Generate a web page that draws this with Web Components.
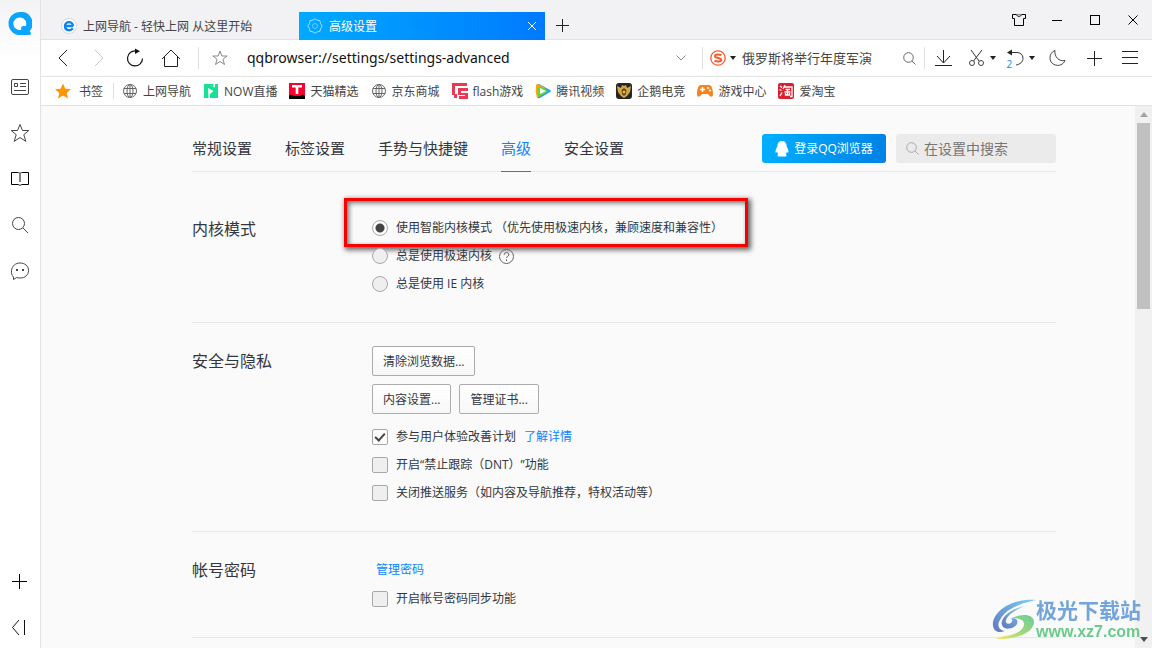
<!DOCTYPE html>
<html lang="zh-CN">
<head>
<meta charset="utf-8">
<meta name="viewport" content="width=device-width, initial-scale=1">
<title>高级设置</title>
<style>
  html, body { margin: 0; height: 100%; }
  body {
    font: 12px/20px "Open Sans", "Noto Sans CJK SC", sans-serif;
    color: #333640;
    overflow: hidden;
    text-spacing-trim: space-all;
  }
</style>
</head>
<body>
<browser-window></browser-window>

<script>
const ICONS = {
  logo: [24, 24, '<path fill="#0aa5ff" d="M12 0a11.500 11.500 0 1 0 0 23h8.500q2.500 0 2.500-1.500c0-1-1-1.500-1.200-2.500A11.500 11.500 0 0 0 12 0z"/><path fill="#fff" d="M12 5.500a6.300 6.300 0 1 0 1.500 12.300c-1.500-2.600.7-4.600 4.300-3.600A6.300 6.300 0 0 0 12 5.500z"/>'],
  news: [20, 18, '<rect x="1.500" y="1.500" width="17" height="15" rx="1.500"/><path d="M4.500 5.500h3v3h-3zM10 5.500h6M10 8.500h6M4 12.500h12"/>'],
  star: [20, 20, '<path d="M10 1.500l2.500 6h6.300l-5 4.200 2 6.600L10 14.600l-5.800 3.700 2-6.600-5-4.200h6.300z"/>'],
  book: [20, 16, '<path stroke="#000" d="M10 3v8M10 2.500C9 1.500 8 1.500 7 1.500H1.500v12H7c1.500 0 2.500.2 3 1 .5-.8 1.500-1 3-1h5.500v-12H13c-1 0-2 0-3 1z"/>'],
  search: [18, 18, '<circle cx="7.500" cy="7.500" r="6"/><path d="M12 12l5 5"/>'],
  chat: [20, 20, '<path d="M3.500 16C1.800 14.500 1.200 12 1.500 9.500 2 5 5.500 2 10 2c5 0 8.500 3 8.500 7.500S15 17 10 17c-1.300 0-2.300-.1-3.300-.5L3.500 18.500z"/><path stroke-width="2" stroke="#444" d="M6 9h2M12 9h2"/>'],
  plus: [16, 16, '<path stroke="#000" d="M7.500 1v15M0 8.500h15"/>'],
  collapse: [16, 16, '<path stroke="#111" d="M7 1L.5 8.500 7 16M12.500 1v15"/>'],
  ie: [16, 16, '<circle cx="8" cy="8" r="7.500" fill="#fff" stroke="#d3d9e2"/><path stroke="#0b84f5" stroke-width="2.400" d="M4 8h8.200M12 8c0-5.200-8-5.200-8 0s6 5 7.800 2.300"/>'],
  gear: [16, 16, '<path stroke="#9fdcff" d="M8 .8l2 1.300 2.900.5.6 2.800L15.200 8l-1.700 2.600-.6 2.800-2.900.5-2 1.300-2-1.300-2.900-.5-.6-2.800L.8 8l1.700-2.600.6-2.800L6 2.100z"/><circle cx="8" cy="8" r="2.500" stroke="#6cc7ff"/>'],
  close: [10, 10, '<path stroke="currentColor" d="M1 1l8 8M9 1L1 9"/>'],
  shirt: [14, 14, '<path stroke="#000" d="M.5 1.500h4c.5 2.500 4.500 2.500 5 0h4v4h-2v7h-9v-7h-2z"/><path stroke="#888" d="M4.500 1.500h5"/>'],
  min: [11, 11, '<path stroke="#000" d="M0 5.500h10"/>'],
  max: [11, 11, '<rect x=".5" y=".5" width="9" height="9" stroke="#000"/>'],
  winclose: [11, 11, '<path stroke="#000" d="M.5.500l9 9M9.500.500l-9 9"/>'],
  back: [10, 18, '<path stroke="#222" d="M9 1L1 9l8 8"/>'],
  forward: [10, 18, '<path stroke="#c8c8c8" d="M1 1l8 8-8 8"/>'],
  reload: [18, 20, '<path stroke="#111" stroke-width="1.200" d="M10 3a7.500 7.500 0 1 0 6.500 7.500"/><path fill="#111" d="M9 .500l5 2.800-5 2.700z"/>'],
  home: [20, 18, '<path stroke="#222" d="M1 10L10 1l9 9M3.500 8v9.500h13V8"/>'],
  down: [10, 6, '<path stroke="#888" d="M.5.500L5 5 9.500.500"/>'],
  caret: [6, 4, '<path fill="#222" d="M0 0h6L3 4z"/>'],
  sogou: [16, 16, '<circle cx="8" cy="8" r="7.200" stroke="#fb5a2b" stroke-width="1.300" fill="#fff"/><path stroke="#fb5a2b" stroke-width="2" d="M11.500 5.200C9 4 5 4 5 6.200S11.300 7.500 11.300 9.800 7 12 4.500 10.700"/>'],
  download: [18, 18, '<path stroke="#222" d="M8.500 1v13M2 7l6.500 7L15 7M0 16.500h17"/>'],
  cut: [18, 18, '<path stroke="#333" d="M3 1l8 11M14 1L5.500 12"/><circle cx="4" cy="14" r="2.500"/><circle cx="13" cy="14" r="2.500"/>'],
  undo: [18, 18, '<path stroke="#333" d="M3 3.500h7c3 0 6 2 6 5.700S13 15.500 9 16"/><path fill="#222" d="M0 3.500L5 .500v6z"/>'],
  moon: [18, 18, '<path d="M6 1.500C-.5 4-.5 13 5 15.500c4.500 2.200 9.500 0 11-4-6 1.500-11-4-10-10z"/>'],
  add: [16, 16, '<path stroke="#222" d="M8.500 1v15M1 8.500h15"/>'],
  addtab: [14, 14, '<path stroke="#222" d="M7.500 0v13M1 6.500h13"/>'],
  menu: [16, 16, '<path stroke="#222" d="M0 1.500h16M0 7.500h16M0 13.500h16"/>'],
  goldstar: [16, 16, '<path fill="#ff9500" d="M8 .5l2.300 5.200 5.700.5-4.300 3.900 1.300 5.400-5-3-5 3 1.300-5.400L0 6.200l5.700-.5z"/>'],
  globe: [16, 16, '<g stroke="#666"><circle cx="8" cy="8" r="6.500"/><ellipse cx="8" cy="8" rx="3" ry="6.500"/><path d="M8 1.500v13M2 5.500h12M2 10.500h12"/></g>'],
  now: [16, 16, '<path fill="#16e295" d="M1 1h14v14H1z"/><path fill="#fff" d="M4.500 1L12 4.500V1h-1.500v2.500zM5 5l5.500 3L7 11v4l-1.500 0z"/>'],
  tmall: [16, 16, '<path fill="#f9002f" d="M0 0h16v13H0z"/><path fill="#000" d="M0 13c3-2 3-1 5 0h6c2-1 2-2 5 0v3H0z"/><path fill="#fff" d="M3 2h10v2.500H9.300V11H6.700V4.500H3z"/>'],
  flash: [16, 16, '<path fill="#e83a53" d="M0 0h15v3H3v8h2v4H2v-3H0zM6 5h10v3H9v2h7v6H7v-3h6v-1H6z"/>'],
  video: [16, 16, '<path fill="#21a1f3" d="M2 2Q3 0 6 2l9 5q2 1 0 2L5 15q-2 1-3-1z"/><path fill="#f9a31a" d="M1 2q1-2 4 0l5 3-5 8-3 2Q0 9 1 2z"/><path fill="#67d52b" d="M3 4q3-1 10 4-6 5-10 5z"/><path fill="#fff" d="M5 5l6 3-6 3z"/>'],
  esport: [16, 16, '<rect width="16" height="16" rx="3" fill="#262626"/><path fill="#d4a747" d="M1 3l4 2 1-3 2 1 2-1 1 3 4-2-1 6-3 4-3 2-3-2-3-4z"/><path fill="#5d4215" d="M8 5l2.500 2L10 11l-2 2-2-2-.5-4z"/><circle cx="8" cy="9" r="1.500" fill="#eab941"/>'],
  game: [16, 16, '<path fill="#f5841f" d="M4 2h8c3 0 4 5 4 9 0 4-3 3-5 0H5c-2 3-5 4-5 0 0-4 1-9 4-9z"/><path stroke="#fff" stroke-width="1.500" d="M3 6.500h5M5.500 4v5"/><circle cx="11" cy="5" r="1" fill="#fff"/><circle cx="13" cy="7.500" r="1" fill="#fff"/>'],
  taobao: [16, 16, '<rect width="16" height="16" rx="2" fill="#d9202f"/><path stroke="#fff" stroke-width="1.300" d="M2 3l2 1.500M1.500 6.500l2 1M2 13l2-3.500M7 2L5 6M6.500 4H14v9.500h-2M7.500 6.500h4.500M6.500 9H12.500M9.500 6.500V12M7.500 10v2h4v-2"/>'],
  penguin: [14, 16, '<path fill="#fff" d="M7 0c3 0 4.700 2 4.700 5.500.8 1.500 1.800 3.500 1.800 5.500 0 1-.8.8-1.500-.2-.2 1-.6 1.800-1.200 2.400 1 .6 1.200 2.300-.5 2.300H3.700c-1.700 0-1.500-1.700-.5-2.300-.6-.6-1-1.400-1.200-2.400-.7 1-1.500 1.200-1.500.2 0-2 1-4 1.800-5.500C2.300 2 4 0 7 0z"/>'],
  find: [13, 13, '<circle cx="5.500" cy="5.500" r="4.800" stroke="#aaa"/><path stroke="#aaa" d="M9 9l3.500 3.500"/>'],
  lens: [13, 13, '<circle cx="5.500" cy="5.500" r="4.800" stroke="#666"/><path stroke="#666" d="M9 9l3.500 3.500"/>'],
  graystar: [16, 16, '<path stroke="#8a8a8a" d="M8 1l1.800 5h5.400l-4.300 3.300 1.600 5.200L8 11.500l-4.500 3 1.600-5.200L.8 6h5.400z"/>'],
  help: [16, 16, '<circle cx="8.500" cy="8.500" r="7" stroke="#666"/><path stroke="#555" d="M6.200 6.800c0-3 4.600-3 4.600 0 0 1.700-2.300 1.700-2.300 3.200M8.500 11.500V13"/>'],
  up: [8, 5, '<path fill="#a3a3a3" d="M4 0l4 5H0z"/>'],
  dn: [8, 5, '<path fill="#505050" d="M0 0h8L4 5z"/>'],
  swirl: [44, 42, '<defs><linearGradient id="a" x1="0" y1="1" x2="1" y2="0"><stop offset="0" stop-color="#6078bd"/><stop offset="1" stop-color="#7bd0f5"/></linearGradient><linearGradient id="b" x1="0" y1="1" x2="1" y2="0"><stop offset="0" stop-color="#f2ea6a"/><stop offset=".5" stop-color="#9dd67c"/><stop offset="1" stop-color="#6ccb9c"/></linearGradient></defs><path fill="url(#a)" d="M44 1C24-1 4 9 1 23c-1 8 4 12 12 9-7-1-8-6-5-11C12 12 24 5 44 1z"/><path fill="url(#a)" d="M33 7C18 10 8 19 10 26c2 6 12 4 15-1 2-4-2-7-7-5 3 0 3 2 1 4-3 2-6 0-5-3 2-6 11-11 19-14z"/><path fill="url(#b)" d="M20 19c10-5 22-4 22 4 0 10-17 18-38 17 5-2 7-3 10-3 11-2 17-6 18-11 1-5-5-7-12-7z"/>']
};

const define = (name, markup, setup) => {
  const template = document.createElement('template');
  template.innerHTML = markup;
  customElements.define(name, class extends HTMLElement {
    constructor() {
      super();
      this.attachShadow({ mode: 'open' }).append(template.content.cloneNode(true));
    }
    connectedCallback() { if (setup) setup(this, this.shadowRoot); }
  });
};

define('ui-icon', `<style>
  :host { display: inline-flex; flex: none; }
  svg { display: block; fill: none; stroke: none; }
</style>`, (host, root) => {
  const [w, h, art] = ICONS[host.getAttribute('name')];
  const outlined = art.startsWith('<g ') ? art : art.replace(/<(path|circle|rect)(?![^>]*(?:fill|stroke)=)/g, '<$1 stroke="#444"');
  const holder = document.createElement('template');
  holder.innerHTML = `<svg aria-hidden="true" width="${w}" height="${h}" viewBox="0 0 ${w} ${h}">${outlined}</svg>`;
  root.append(holder.content);
});

define('tool-button', `<style>
  :host { display: flex; flex: none; width: 36px; }
  button { flex: 1; display: flex; align-items: center; justify-content: center; gap: 4px; padding: 0; border: 0; background: none; color: inherit; font: inherit; }
</style><button type="button"><slot></slot></button>`, (host, root) => {
  root.querySelector('button').setAttribute('aria-label', host.getAttribute('label'));
});

define('side-rail', `<style>
  :host { display: flex; flex-direction: column; gap: 4px; box-sizing: border-box; width: 41px; border-right: 1px solid #e3e3e5; background: linear-gradient(#f3f3f5, #fff 60px); }
  .brand { display: flex; justify-content: center; align-items: center; height: 48px; margin-bottom: 14px; }
  tool-button { width: 40px; height: 42px; }
  .push { margin-top: auto; }
</style>
<div class="brand"><ui-icon name="logo"></ui-icon></div>
<tool-button label="资讯"><ui-icon name="news"></ui-icon></tool-button>
<tool-button label="收藏"><ui-icon name="star"></ui-icon></tool-button>
<tool-button label="阅读"><ui-icon name="book"></ui-icon></tool-button>
<tool-button label="搜索"><ui-icon name="search"></ui-icon></tool-button>
<tool-button label="消息"><ui-icon name="chat"></ui-icon></tool-button>
<tool-button class="push" label="添加"><ui-icon name="plus"></ui-icon></tool-button>
<tool-button label="收起"><ui-icon name="collapse"></ui-icon></tool-button>`);

define('browser-tab', `<style>
  :host { display: flex; align-items: center; gap: 6px; box-sizing: border-box; width: 246px; height: 28px; padding: 0 8px; color: #444; }
  :host([active]) { background: linear-gradient(90deg, #00aaff, #007aff); color: #fff; }
  .title { flex: 1; white-space: nowrap; overflow: hidden; line-height: 22px; padding-top: 2px; }
  tool-button { width: 10px; height: 20px; }
  :host(:not([active])) tool-button { display: none; }
</style>
<slot name="icon"></slot><span class="title"><slot></slot></span>
<tool-button label="关闭标签"><ui-icon name="close"></ui-icon></tool-button>`);

define('tab-strip', `<style>
  :host { display: flex; align-items: flex-end; height: 40px; padding-left: 12px; background: linear-gradient(#f2f2f4 39px, #e3e3e5 39px); }
  .new { width: 34px; height: 28px; }
  .controls { display: flex; margin-left: auto; height: 40px; }
  .controls tool-button { width: 38px; }
</style>
<browser-tab><ui-icon slot="icon" name="ie"></ui-icon>上网导航 - 轻快上网 从这里开始</browser-tab>
<browser-tab active><ui-icon slot="icon" name="gear"></ui-icon>高级设置</browser-tab>
<tool-button class="new" label="新建标签"><ui-icon name="addtab"></ui-icon></tool-button>
<div class="controls">
  <tool-button label="皮肤"><ui-icon name="shirt"></ui-icon></tool-button>
  <tool-button label="最小化"><ui-icon name="min"></ui-icon></tool-button>
  <tool-button label="最大化"><ui-icon name="max"></ui-icon></tool-button>
  <tool-button label="关闭"><ui-icon name="winclose"></ui-icon></tool-button>
</div>`);

define('nav-bar', `<style>
  :host { display: flex; align-items: stretch; height: 36px; padding: 0 4px; border-bottom: 1px solid #e3e3e5; background: #fff; }
  input { min-width: 0; box-sizing: border-box; border: 0; padding: 0; background: none; outline: 0; font: inherit; }
  .url { flex: 1; padding-left: 6px; font-family: "Noto Sans", sans-serif; font-size: 14px; color: #111; }
  .query { width: 153px; font-size: 13px; color: #444; }
  .query::placeholder { color: #444; opacity: 1; }
  .rule { flex: none; width: 1px; height: 22px; margin: 7px 0; background: #e0e0e0; }
  .rule.first { margin-left: 9px; }
  .rule.mid { margin-left: 11px; }
  .mark { width: 42px; }
  .drop { width: 20px; }
  .engine { width: 39px; }
  .lens { width: 29px; }
  .wide { width: 38px; }
  .restore { width: 39px; }
  .undo { position: relative; display: flex; }
  .count { position: absolute; left: 0; bottom: -2px; font-size: 10px; line-height: 10px; color: #1a86ff; }
</style>
<tool-button label="后退"><ui-icon name="back"></ui-icon></tool-button>
<tool-button label="前进"><ui-icon name="forward"></ui-icon></tool-button>
<tool-button label="刷新"><ui-icon name="reload"></ui-icon></tool-button>
<tool-button label="主页"><ui-icon name="home"></ui-icon></tool-button>
<span class="rule first"></span>
<tool-button class="mark" label="收藏此页"><ui-icon name="graystar"></ui-icon></tool-button>
<input class="url" aria-label="地址" value="qqbrowser://settings/settings-advanced">
<tool-button class="drop" label="历史地址"><ui-icon name="down"></ui-icon></tool-button>
<span class="rule mid"></span>
<tool-button class="engine" label="搜索引擎"><ui-icon name="sogou"></ui-icon><ui-icon name="caret"></ui-icon></tool-button>
<input class="query" aria-label="搜索" placeholder="俄罗斯将举行年度军演">
<tool-button class="lens" label="搜索"><ui-icon name="lens"></ui-icon></tool-button>
<span class="rule"></span>
<tool-button class="wide" label="下载"><ui-icon name="download"></ui-icon></tool-button>
<tool-button class="wide" label="截图"><ui-icon name="cut"></ui-icon><ui-icon name="caret"></ui-icon></tool-button>
<tool-button class="restore" label="恢复标签"><span class="undo"><ui-icon name="undo"></ui-icon><span class="count">2</span></span><ui-icon name="caret"></ui-icon></tool-button>
<tool-button label="夜间模式"><ui-icon name="moon"></ui-icon></tool-button>
<tool-button label="添加"><ui-icon name="add"></ui-icon></tool-button>
<tool-button label="菜单"><ui-icon name="menu"></ui-icon></tool-button>`);

define('book-mark', `<style>
  :host { display: flex; }
  a { display: flex; align-items: center; gap: 5px; color: #444; text-decoration: none; white-space: nowrap; }
  :host([folder]) a { gap: 8px; }
  span { padding-top: 2px; }
</style><a href="#"><span><slot></slot></span></a>`, (host, root) => {
  const icon = document.createElement('ui-icon');
  icon.setAttribute('name', host.getAttribute('icon'));
  root.querySelector('a').prepend(icon);
});

define('bookmark-bar', `<style>
  :host { display: flex; align-items: center; gap: 12px; height: 28px; padding-left: 14px; border-bottom: 1px solid #e3e3e5; background: #fff; }
  .rule { width: 1px; height: 16px; margin: 0 -4px 0 -2px; background: #e0e0e0; }
</style>
<book-mark folder icon="goldstar">书签</book-mark><span class="rule"></span>
<book-mark icon="globe">上网导航</book-mark>
<book-mark icon="now">NOW直播</book-mark>
<book-mark icon="tmall">天猫精选</book-mark>
<book-mark icon="globe">京东商城</book-mark>
<book-mark icon="flash">flash游戏</book-mark>
<book-mark icon="video">腾讯视频</book-mark>
<book-mark icon="esport">企鹅电竞</book-mark>
<book-mark icon="game">游戏中心</book-mark>
<book-mark icon="taobao">爱淘宝</book-mark>`);

define('settings-header', `<style>
  :host { display: flex; align-items: flex-start; height: 65px; border-bottom: 1px solid #e8e8e8; }
  nav { display: flex; gap: 33px; font-size: 15px; line-height: 28px; }
  nav a { box-sizing: border-box; height: 66px; padding-top: 28px; color: #333640; text-decoration: none; white-space: nowrap; }
  nav a[aria-current] { color: #0a84ff; border-bottom: 1px solid #0a84ff; }
  .actions { display: flex; gap: 10px; margin: 28px 0 0 auto; }
  button { display: flex; align-items: center; justify-content: center; gap: 5px; width: 124px; height: 29px; padding: 0; border: 0; border-radius: 3px; background: linear-gradient(100deg, #00b0ff, #0080e5); color: #fff; font: inherit; white-space: nowrap; }
  .find { display: flex; align-items: center; gap: 5px; box-sizing: border-box; width: 160px; height: 29px; padding: 0 10px; border-radius: 3px; background: #ebebeb; }
  input { flex: 1; min-width: 0; padding: 0; border: 0; background: none; outline: 0; font: inherit; font-size: 14px; }
  input::placeholder { color: #757575; opacity: 1; }
</style>
<nav><a href="#">常规设置</a><a href="#">标签设置</a><a href="#">手势与快捷键</a><a href="#" aria-current="page">高级</a><a href="#">安全设置</a></nav>
<div class="actions">
  <button type="button"><ui-icon name="penguin"></ui-icon>登录QQ浏览器</button>
  <label class="find"><ui-icon name="find"></ui-icon><input aria-label="在设置中搜索" placeholder="在设置中搜索"></label>
</div>`);

define('settings-section', `<style>
  :host { display: flex; padding: 23px 0 24px; border-bottom: 1px solid #e8e8e8; }
  h2 { flex: none; width: 180px; margin: 0; font-size: 16px; font-weight: 400; line-height: 31px; }
  .body { flex: 1; min-width: 0; }
</style><h2><slot name="title"></slot></h2><div class="body"><slot></slot></div>`);

define('highlight-box', `<style>
  :host { position: absolute; left: -28px; top: -16px; bottom: -5px; width: 404px; box-sizing: border-box; border: 3px solid #f60000; pointer-events: none; box-shadow: 2px 2px 5px 1px rgba(0,0,0,.6), inset 2px 2px 5px rgba(0,0,0,.55); }
</style>`);

define('settings-page', `<style>
  :host { display: block; overflow: hidden; padding: 0 79px 0 151px; background: #fafafa; }
  .sections { margin-top: 19px; }
  .row { position: relative; display: flex; align-items: center; height: 28px; white-space: nowrap; }
  .row label { display: flex; align-items: center; gap: 8px; }
  .row a, .link { color: #0a84ff; text-decoration: none; }
  .row a { margin-left: 8px; }
  .row ui-icon { margin-left: 6px; }
  input { appearance: none; flex: none; width: 16px; height: 16px; margin: 0; border: 1px solid #a8a8a8; border-radius: 2px; background: #efefef; }
  input[type=radio] { border-radius: 50%; }
  input[type=radio]:checked { background: radial-gradient(circle, #444 4px, #fcfcfc 5px); }
  input[type=checkbox]:checked { display: grid; place-content: center; background: #fcfcfc; }
  input[type=checkbox]:checked::before { content: ""; width: 8px; height: 4px; margin-bottom: 3px; border: solid #444; border-width: 0 0 2px 2px; transform: rotate(-48deg); }
  .buttons { display: flex; gap: 8px; margin-bottom: 8px; }
  .buttons.last { margin-bottom: 9px; }
  button { height: 30px; padding: 2px 10px 0; border: 1px solid #acacac; border-radius: 2px; background: linear-gradient(#fff, #f7f7f7); color: inherit; font: inherit; }
  .link { display: block; width: max-content; margin-left: 4px; line-height: 30px; }
</style>
<settings-header></settings-header>
<div class="sections">
  <settings-section><span slot="title">内核模式</span>
    <div class="row"><label><input type="radio" name="kernel" checked>使用智能内核模式 （优先使用极速内核，兼顾速度和兼容性）</label><highlight-box></highlight-box></div>
    <div class="row"><label><input type="radio" name="kernel">总是使用极速内核</label><ui-icon name="help"></ui-icon></div>
    <div class="row"><label><input type="radio" name="kernel">总是使用 IE 内核</label></div>
  </settings-section>
  <settings-section><span slot="title">安全与隐私</span>
    <div class="buttons"><button type="button">清除浏览数据...</button></div>
    <div class="buttons last"><button type="button">内容设置...</button><button type="button">管理证书...</button></div>
    <div class="row"><label><input type="checkbox" checked>参与用户体验改善计划</label><a href="#">了解详情</a></div>
    <div class="row"><label><input type="checkbox">开启“禁止跟踪（DNT）”功能</label></div>
    <div class="row"><label><input type="checkbox">关闭推送服务（如内容及导航推荐，特权活动等）</label></div>
  </settings-section>
  <settings-section><span slot="title">帐号密码</span>
    <a class="link" href="#">管理密码</a>
    <div class="row"><label><input type="checkbox">开启帐号密码同步功能</label></div>
  </settings-section>
</div>`);

define('page-scrollbar', `<style>
  :host { display: flex; flex-direction: column; align-items: center; width: 17px; background: #f1f1f1; }
  ui-icon { height: 17px; align-items: center; }
  .thumb { flex: 11; width: 13px; background: #c1c1c1; }
  .rest { flex: 19; }
</style><ui-icon name="up"></ui-icon><div class="thumb"></div><div class="rest"></div><ui-icon name="dn"></ui-icon>`);

define('site-watermark', `<style>
  :host { position: fixed; right: 11px; bottom: 6px; display: flex; align-items: center; font-weight: 700; white-space: nowrap; }
  .name { display: block; font-size: 21px; line-height: 24px; color: #74a5da; }
  .site { display: block; font: 700 16px/20px "Liberation Sans", sans-serif; color: #6cc98c; }
</style><ui-icon name="swirl"></ui-icon><div><span class="name">极光下载站</span><span class="site">www.xz7.com</span></div>`);

define('browser-window', `<style>
  :host { display: grid; grid-template-columns: auto minmax(0, 1fr); height: 100vh; }
  .main { display: flex; flex-direction: column; min-height: 0; }
  .view { flex: 1; display: grid; grid-template-columns: minmax(0, 1fr) auto; min-height: 0; }
</style>
<side-rail></side-rail>
<div class="main">
  <tab-strip></tab-strip>
  <nav-bar></nav-bar>
  <bookmark-bar></bookmark-bar>
  <div class="view"><settings-page></settings-page><page-scrollbar></page-scrollbar></div>
</div>
<site-watermark></site-watermark>`);
</script>
</body>
</html>
